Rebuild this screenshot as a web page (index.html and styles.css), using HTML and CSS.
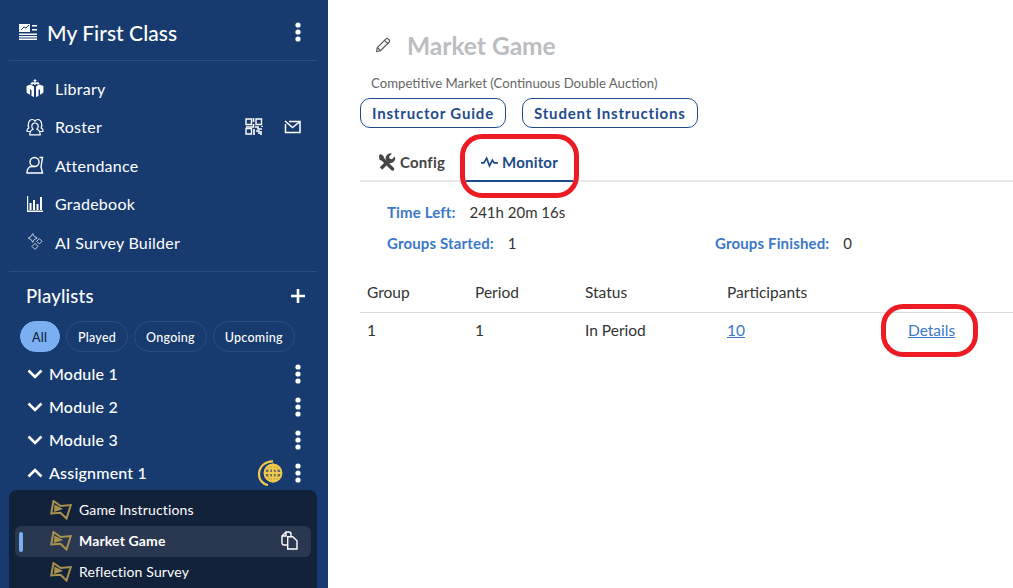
FILE: index.html
```html
<!DOCTYPE html>
<html lang="en">
<head>
    <meta charset="UTF-8">
    <meta name="viewport" content="width=device-width, initial-scale=1.0">
    <title>Market Game</title>
    <link rel="stylesheet" href="styles.css">
</head>
<body>
    <svg class="defs" width="0" height="0">
        <symbol id="kebab" viewBox="0 0 6 20"><circle cx="3" cy="3" r="2.6"/><circle cx="3" cy="10" r="2.6"/><circle cx="3" cy="17" r="2.6"/></symbol>
        <symbol id="chev-down" viewBox="0 0 16 10"><path d="M1.500 1.500 8 8l6.500-6.500" fill="none" stroke="#fff" stroke-width="2.600"/></symbol>
        <symbol id="game" viewBox="0 0 22 20"><path d="M3.500 1 10.700 6l10.100-1-4.300 13.500-6-5.800-9.300.8z" fill="none" stroke="#a8924e" stroke-width="2"/><path d="M4.500 4.500 13 9l-9 3z" fill="#a8924e"/></symbol>
    </svg>

    <div class="app">
        <!-- Sidebar -->
        <aside class="sidebar">
            <div class="class-head">
                <svg class="class-icon" width="18" height="16" viewBox="0 0 18 16" fill="#fff"><path d="M0 0h11v8H0z"/><path d="M2 6l3-3 2 1 3-3" fill="none" stroke="#173a6f" stroke-width="1"/><path d="M13 1h5v1.500h-5zM13 5h5v1.500h-5zM0 9.500h18V11H0zM0 12h18v1.500H0zM0 14.500h18V16H0z"/></svg>
                <span class="class-name">My First Class</span>
                <svg class="kebab" width="6" height="20"><use href="#kebab"/></svg>
            </div>

            <nav class="nav">
                <div class="nav-item">
                    <svg width="18" height="18" viewBox="0 0 18 18" fill="#fff"><path d="M9 0l2 2H9.700v1.500h1.800V2.500L13.500 4.500l-2 2V5H9.700v1H8.300V5H6.500v1.500l-2-2 2-2v1h1.800V2H7z"/><path d="M.6 7l3.900-1.500L8 7.500V18l-2.500-1v-6L4 10.300v5.400l-3.400-2zM17.400 7l-3.900-1.500L10 7.500V18l2.500-1v-6l1.500-.7v5.400l3.400-2z"/></svg>
                    <span>Library</span>
                </div>
                <div class="nav-item">
                    <svg width="18" height="18" viewBox="0 0 18 18" fill="none" stroke="#fff" stroke-width="1.200"><path d="M4.500 13.500H1.800C.3 13.500.8 11 2.800 10 1.500 7 2.500 1.500 6 1.500c1.500 0 2.500.8 3 1.700.5-.9 1.500-1.700 3-1.700 3.500 0 4.500 5.500 3.200 8.500 2 1 2.500 3.500 1 3.500h-2.700"/><path d="M9 5c-2 0-3.200 1.500-3.200 3.300 0 1.200.5 2.200 1.200 2.900C5 12 3.800 13.500 3.800 16.800h10.400c0-3.300-1.200-4.800-3.200-5.600.7-.7 1.200-1.700 1.200-2.900C12.200 6.500 11 5 9 5z" fill="#173a6f"/></svg>
                    <span>Roster</span>
                    <span class="nav-actions">
                        <svg width="18" height="17" viewBox="0 0 18 17" fill="none" stroke="#fff" stroke-width="1.400"><path d="M1 1h5.500v5.500H1zM11 1h5.500v5.500H11zM1 10.500h5.500V16H1z"/><path d="M8.500 0v4M8.500 6v3H1M10 9h3v2h4M17 8v1M9 11v6M11 13h3v3M16 13v4" stroke-width="1.600"/></svg>
                        <svg width="17" height="14" viewBox="0 0 17 14" fill="none" stroke="#fff" stroke-width="1.500"><path d="M5 1.500h11v11H1.500V4M1 1l7.500 6.500L16 1.500"/></svg>
                    </span>
                </div>
                <div class="nav-item">
                    <svg width="18" height="18" viewBox="0 0 18 18" fill="none" stroke="#fff" stroke-width="1.400"><circle cx="8.500" cy="6" r="4.500"/><path d="M13.500 1.500h3L15 11l1.500 6H1c0-4 2-6.500 5-6.500h3"/></svg>
                    <span>Attendance</span>
                </div>
                <div class="nav-item">
                    <svg width="18" height="16" viewBox="0 0 18 16" fill="#fff"><path d="M1 0h1.200v14.500H17V16H1z"/><path d="M3.500 7h2v7h-2zM7 4h2v10H7zM10.500 8h2v6h-2zM14 1h2v13h-2z"/></svg>
                    <span>Gradebook</span>
                </div>
                <div class="nav-item">
                    <svg width="18" height="18" viewBox="0 0 18 18" fill="none" stroke="#c4d0e2" stroke-width="1"><path d="M6.700.6Q7.300 3.900 11.200 5 7.300 6.100 6.700 9.400 6.100 6.100 2.200 5 6.100 3.900 6.700.6zM13.300 5.600l2.700 2.700-2.700 2.700-2.700-2.700zM9 10.400l3 3-3 3-3-3z"/></svg>
                    <span>AI Survey Builder</span>
                </div>
            </nav>

            <div class="playlists">
                <div class="playlists-head">
                    <span>Playlists</span>
                    <svg width="14" height="14" viewBox="0 0 14 14" fill="#fff"><path d="M5.700 0h2.600v5.700H14v2.600H8.300V14H5.700V8.300H0V5.700h5.700z"/></svg>
                </div>
                <div class="pills">
                    <span class="pill active">All</span>
                    <span class="pill">Played</span>
                    <span class="pill">Ongoing</span>
                    <span class="pill">Upcoming</span>
                </div>
                <div class="module">
                    <svg class="chev" width="16" height="10"><use href="#chev-down"/></svg>
                    <span>Module 1</span>
                    <svg class="kebab" width="6" height="20"><use href="#kebab"/></svg>
                </div>
                <div class="module">
                    <svg class="chev" width="16" height="10"><use href="#chev-down"/></svg>
                    <span>Module 2</span>
                    <svg class="kebab" width="6" height="20"><use href="#kebab"/></svg>
                </div>
                <div class="module">
                    <svg class="chev" width="16" height="10"><use href="#chev-down"/></svg>
                    <span>Module 3</span>
                    <svg class="kebab" width="6" height="20"><use href="#kebab"/></svg>
                </div>
                <div class="module">
                    <svg class="chev up" width="16" height="10"><use href="#chev-down"/></svg>
                    <span>Assignment 1</span>
                    <svg class="globe" width="26" height="26" viewBox="0 0 26 26" fill="none" stroke="#f2c94c" stroke-width="1.900"><circle cx="15" cy="13" r="8.500" fill="#f2c94c" fill-opacity=".35"/><ellipse cx="15" cy="13" rx="3.800" ry="8.500"/><path d="M6.500 13h17M8 8.500h14M8 17.500h14M15 4.500v17"/><path d="M10 25C4 24 .8 19 1 14 1.300 6 8 1 15 1.300" stroke-width="2.200"/></svg>
                    <svg class="kebab" width="6" height="20"><use href="#kebab"/></svg>
                </div>
            </div>

            <div class="items">
                <div class="item">
                    <svg width="22" height="20"><use href="#game"/></svg>
                    <span>Game Instructions</span>
                </div>
                <div class="item current">
                    <svg width="22" height="20"><use href="#game"/></svg>
                    <span>Market Game</span>
                    <svg class="copy" width="17" height="19" viewBox="0 0 17 19" fill="none" stroke="#fff" stroke-width="1.400"><path d="M6 14H3a2 2 0 0 1-2-2V5l4-4h3a2 2 0 0 1 2 2v2"/><path d="M1 5h4V1"/><path d="M6.700 5.700h5l4.300 4v8.300H6.700z" fill="#2a3750"/></svg>
                </div>
                <div class="item">
                    <svg width="22" height="20"><use href="#game"/></svg>
                    <span>Reflection Survey</span>
                </div>
            </div>
        </aside>

        <!-- Main content -->
        <main class="main">
            <div class="title-row">
                <svg width="16" height="16" viewBox="0 0 16 16" fill="none" stroke="#555" stroke-width="1.100"><path d="M1.500 14.500l.8-4L11 1.800a1.400 1.400 0 0 1 2 0l1.200 1.200a1.400 1.400 0 0 1 0 2L5.500 13.700zM2.300 10.500l3.200 3.200M9.500 3.300l3.200 3.200"/></svg>
                <h1>Market Game</h1>
            </div>
            <p class="subtitle">Competitive Market (Continuous Double Auction)</p>
            <div class="guide-buttons">
                <a class="btn">Instructor Guide</a>
                <a class="btn">Student Instructions</a>
            </div>

            <div class="tabs">
                <div class="tab">
                    <svg width="18" height="18" viewBox="0 0 18 18" fill="#444"><path d="M1 2.500 2.500 1l3 2 .5 2 9.500 9.500q1.500 1.500.3 2.700t-2.700-.3L3.500 7.500l-2-.5z"/><path d="M16.800 3.500 14 6.300l-2.300-.6-.6-2.300L13.900.6A4.800 4.800 0 0 0 8 7l2.900 2.900a4.800 4.800 0 0 0 5.900-6.400z"/><path d="M3 15.500 10 8.500" stroke="#444" stroke-width="3.400"/></svg>
                    Config
                </div>
                <div class="tab active">
                    <svg width="17" height="12" viewBox="0 0 18 12" fill="none" stroke="#1d4a8a" stroke-width="1.800"><path d="M0 7h3l3-5 3 8 3-6 2 3h4"/></svg>
                    Monitor
                    <span class="ring ring-tab"></span>
                </div>
            </div>

            <div class="stats">
                <div class="stat-row">
                    <span class="stat"><b>Time Left:</b> 241h 20m 16s</span>
                </div>
                <div class="stat-row">
                    <span class="stat stat-wide"><b>Groups Started:</b> 1</span>
                    <span class="stat"><b>Groups Finished:</b> 0</span>
                </div>
            </div>

            <div class="table">
                <div class="table-row table-head">
                    <span>Group</span>
                    <span>Period</span>
                    <span>Status</span>
                    <span>Participants</span>
                    <span></span>
                </div>
                <div class="table-row">
                    <span>1</span>
                    <span>1</span>
                    <span>In Period</span>
                    <a class="link">10</a>
                    <a class="link details">Details<span class="ring ring-details"></span></a>
                </div>
            </div>
        </main>
    </div>
</body>
</html>
```

FILE: styles.css
```css
* {
    box-sizing: border-box;
}
html, body {
    margin: 0;
    height: 100%;
    overflow: hidden;
}
body {
    font-family: Lato, "Open Sans", sans-serif;
    background: white;
    color: #333;
}
.defs {
    position: absolute;
}
.app {
    display: flex;
    height: 588px;
}

/* sidebar */
.sidebar {
    width: 328px;
    flex-shrink: 0;
    background-color: #173a6f;
    color: white;
    overflow: hidden;
    padding: 0 11px 0 9px;
}
.kebab {
    fill: white;
    flex-shrink: 0;
}
.class-head {
    height: 61px;
    display: flex;
    align-items: center;
    padding: 4px 16px 0 10px;
    border-bottom: 1px solid #2b4d82;
}
.class-name {
    font-size: 21px;
    font-weight: 500;
    letter-spacing: 0.05px;
    margin-left: 10px;
    flex-grow: 1;
}
.nav {
    height: 211px;
    padding-top: 8px;
    border-bottom: 1px solid #2b4d82;
}
.nav-item {
    height: 38.5px;
    display: flex;
    align-items: center;
    padding-left: 17px;
    font-size: 16px;
    letter-spacing: 0.25px;
}
.nav-item > span:first-of-type {
    margin-left: 11px;
}
.nav-actions {
    margin-left: auto;
    margin-right: 16px;
    display: flex;
    align-items: center;
    gap: 21px;
}
.playlists-head {
    height: 49px;
    display: flex;
    align-items: center;
    justify-content: space-between;
    padding: 0 12px 2px 17px;
    font-size: 18.500px;
    font-weight: 500;
    letter-spacing: 0.2px;
}
.pills {
    display: flex;
    gap: 6px;
    padding-left: 11px;
    margin-bottom: 5px;
}
.pill {
    height: 31px;
    padding: 1px 11px 0;
    display: flex;
    align-items: center;
    border: 1px solid #2b4d82;
    border-radius: 16px;
    font-size: 12.500px;
    font-weight: 500;
    letter-spacing: 0.25px;
}
.pill.active {
    min-width: 40px;
    background-color: #7ab0f2;
    border-color: #7ab0f2;
    color: #14233b;
}
.module {
    height: 33px;
    display: flex;
    align-items: center;
    padding: 0 16px 0 18px;
    font-size: 16px;
    font-weight: 500;
    letter-spacing: 0.2px;
}
.module > span {
    margin-left: 6px;
    flex-grow: 1;
}
.chev.up {
    transform: scaleY(-1);
}
.globe {
    margin-right: 11px;
}
.items {
    margin-top: 1px;
    background-color: #12223a;
    border-radius: 8px;
    padding: 5px 6px;
    height: 120px;
}
.item {
    height: 31px;
    display: flex;
    align-items: center;
    padding: 0 13px 2px 35px;
    font-size: 14px;
    letter-spacing: 0.15px;
    border-radius: 6px;
    position: relative;
}
.item > span {
    margin-left: 7px;
    flex-grow: 1;
}
.item.current {
    background-color: #2a3750;
    font-weight: 700;
}
.item.current::before {
    content: "";
    position: absolute;
    left: 4px;
    top: 6px;
    width: 4px;
    height: 20px;
    border-radius: 2px;
    background-color: #7ab0f2;
}

/* main */
.main {
    flex-grow: 1;
    min-width: 0;
    padding: 0 0 0 32px;
}
.title-row {
    display: flex;
    align-items: center;
    gap: 16px;
    padding: 28px 0 0 15px;
    height: 62px;
}
h1 {
    margin: 0;
    font-size: 24.500px;
    font-weight: 700;
    color: #bbbdc1;
}
.subtitle {
    margin: 12px 0 0 11px;
    font-size: 13.200px;
    line-height: 18px;
    color: #666;
}
.guide-buttons {
    display: flex;
    gap: 16px;
    margin-top: 6px;
}
.btn {
    height: 30px;
    padding: 0 11px;
    display: flex;
    align-items: center;
    border: 1px solid #1f4b8e;
    border-radius: 10px;
    color: #1f4b8e;
    font-size: 15px;
    font-weight: 700;
    letter-spacing: 0.82px;
}
.tabs {
    display: flex;
    height: 42px;
    margin-top: 12px;
    padding-left: 6px;
    border-bottom: 2px solid #e8e8e8;
    font-size: 15px;
    font-weight: 700;
    letter-spacing: 0.2px;
}
.tab {
    display: flex;
    align-items: center;
    gap: 4px;
    padding: 2px 12px 0;
    height: 42px;
    color: #444;
    position: relative;
}
.tab.active {
    margin-left: 9px;
    padding: 4px 15px 0;
    gap: 4px;
    color: #1d4a8a;
    border-bottom: 2px solid #1d4a8a;
}
.ring {
    position: absolute;
    border: 5px solid #ed1c24;
    border-radius: 22px;
    pointer-events: none;
}
.ring-tab {
    left: -6px;
    top: -6px;
    width: 119px;
    height: 64px;
}
.stats {
    padding: 21px 0 0 27px;
    font-size: 15px;
}
.stat-row {
    display: flex;
    height: 31px;
    align-items: flex-start;
}
.stat b {
    color: #3a78c9;
    font-weight: 700;
    letter-spacing: 0.15px;
    margin-right: 10px;
}
.stat-wide {
    width: 328px;
}
.table {
    margin-top: 8px;
    font-size: 15.500px;
}
.table-row {
    display: grid;
    grid-template-columns: 108px 110px 142px 181px 1fr;
    padding-left: 7px;
    height: 34px;
    align-items: center;
}
.table-head {
    height: 40px;
    padding-bottom: 2px;
    border-bottom: 1px solid #ddd;
}
.link {
    color: #3a78c9;
    text-decoration: underline;
}
.details {
    justify-self: start;
    position: relative;
}
.ring-details {
    left: -27px;
    top: -17px;
    width: 97px;
    height: 53px;
}
```
